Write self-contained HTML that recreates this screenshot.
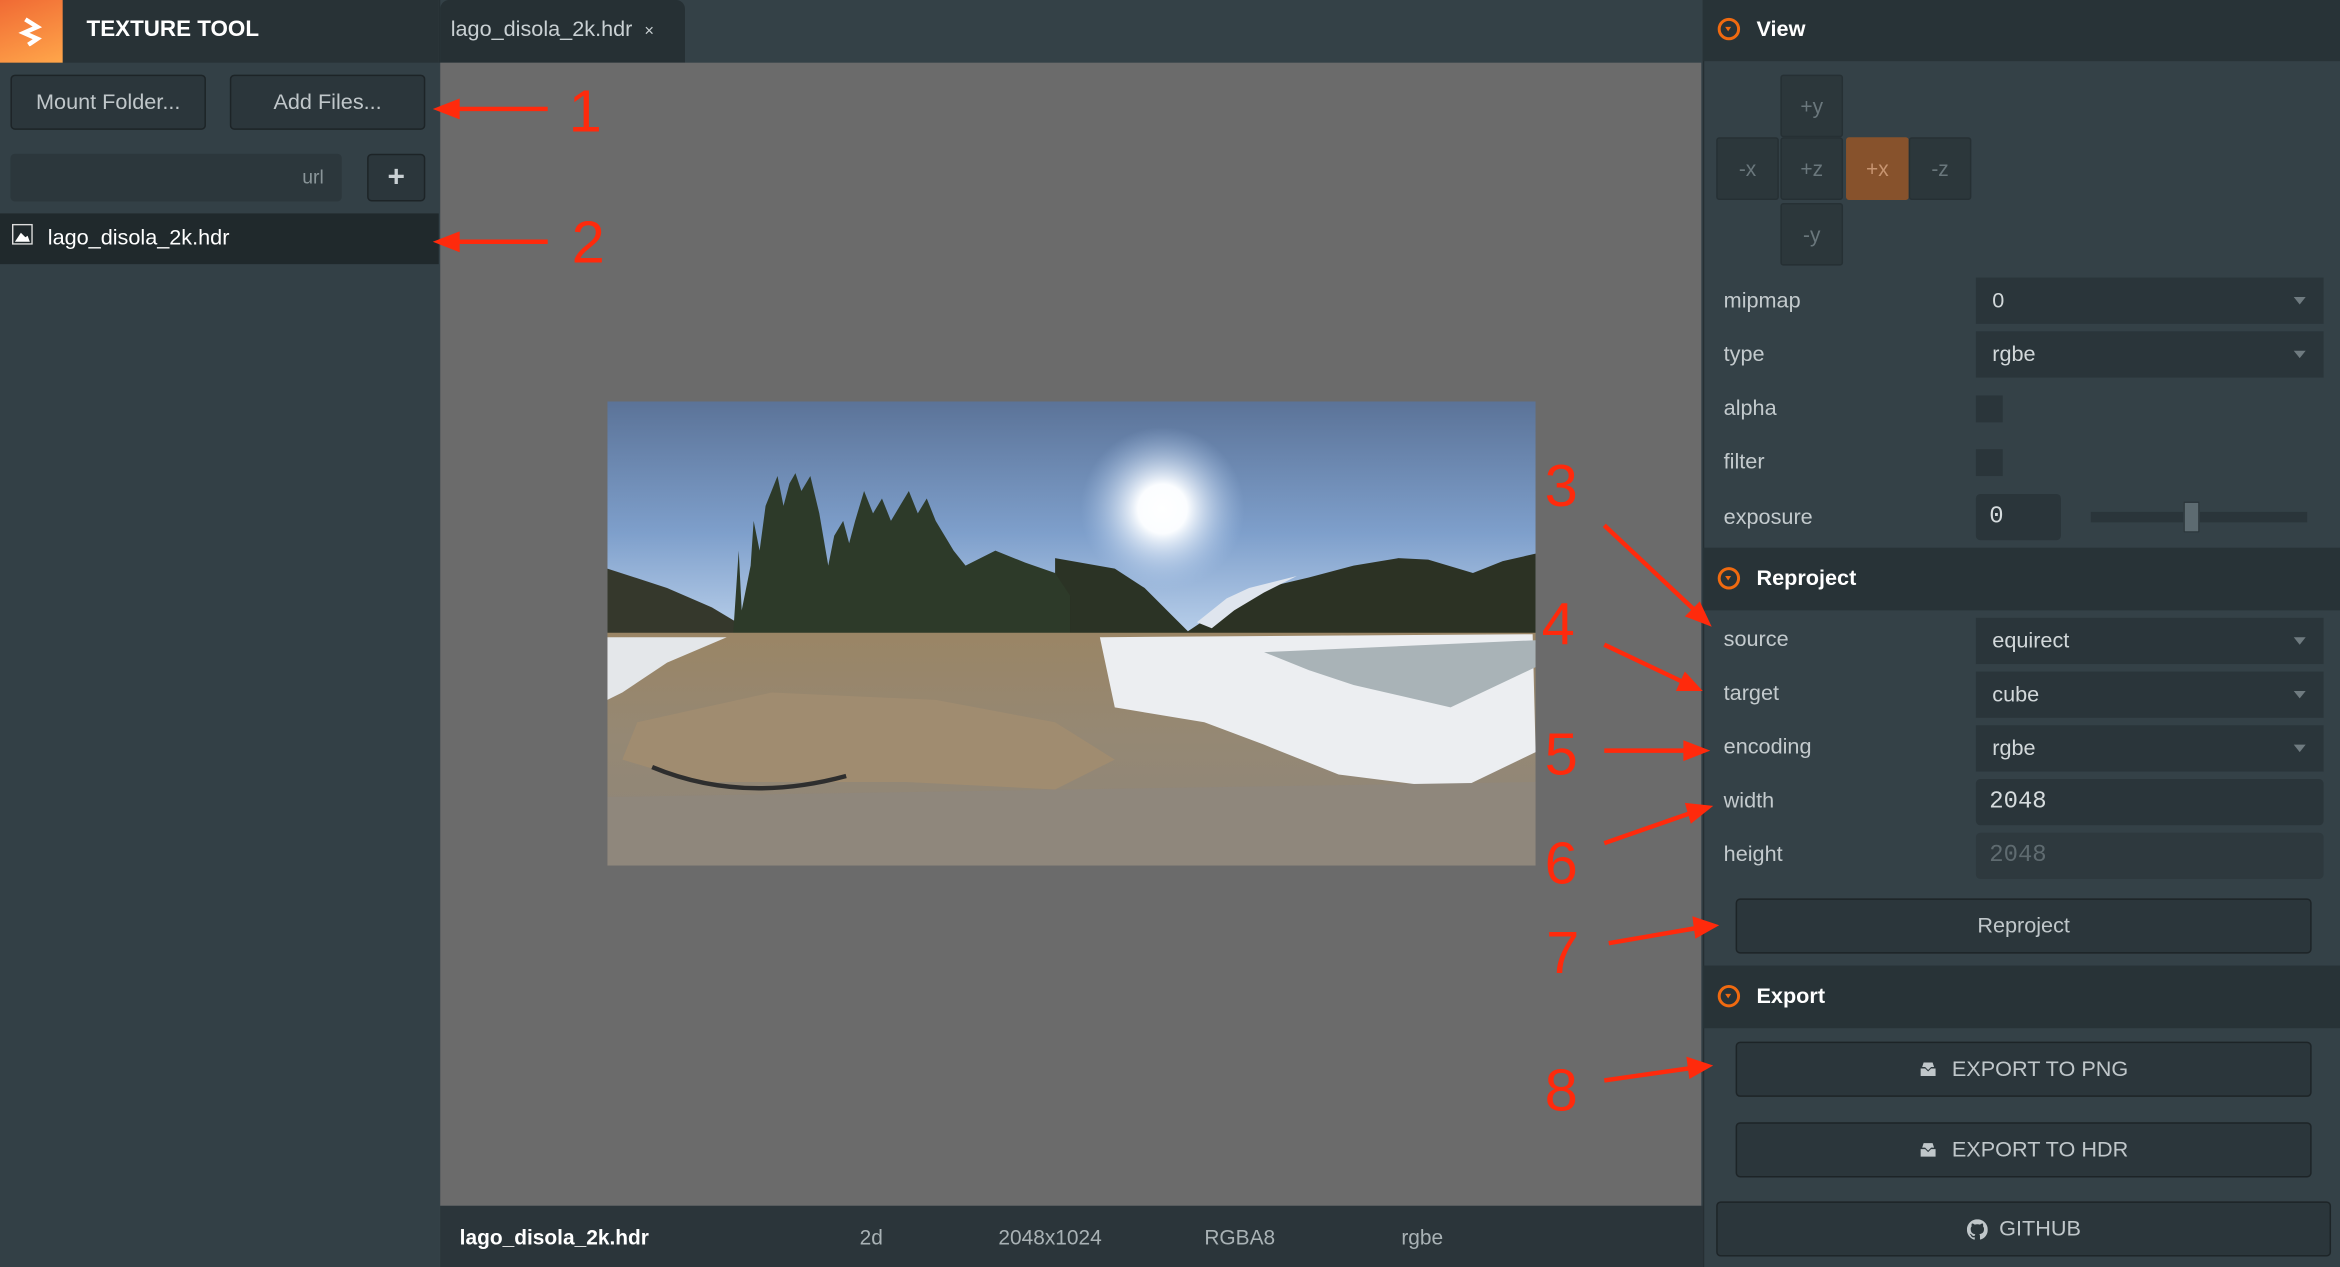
<!DOCTYPE html>
<html><head><meta charset="utf-8"><style>
html,body{margin:0;padding:0;width:2340px;height:1266px;overflow:hidden;background:#344147}
#s{position:absolute;left:0;top:0;width:1568px;height:848.5px;transform:scale(1.49235);transform-origin:0 0;font-family:"Liberation Sans",sans-serif;color:#c9d0d3}
.a{position:absolute;box-sizing:border-box}
.btn{background:#2b363b;border:1px solid #1d2427;border-radius:3px;color:#c0c7ca;font-size:14.5px;display:flex;align-items:center;justify-content:center}
.lbl{position:absolute;left:1155px;font-size:14.5px;color:#c3cacd}
.sel{position:absolute;left:1324px;width:233px;height:31px;background:#2a353a;font-size:14.5px;color:#d2d8da;padding-left:11px;display:flex;align-items:center;box-sizing:border-box}
.sel:after{content:"";position:absolute;right:12px;top:13px;border-left:4.5px solid transparent;border-right:4.5px solid transparent;border-top:5px solid #6f7b80}
.hd{position:absolute;left:1141px;width:427px;background:#283337;font-weight:bold;font-size:14.5px;color:#fff}
.hd i{position:absolute;left:10px;width:15px;height:15px;border:2px solid #f06a10;border-radius:50%;box-sizing:border-box}
.hd i:after{content:"";position:absolute;left:3px;top:4px;border-left:2.5px solid transparent;border-right:2.5px solid transparent;border-top:3.5px solid #f06a10}
.hd span{position:absolute;left:36px}
.cb{position:absolute;width:42px;height:42px;background:#2c373b;border:1px solid #263034;border-radius:2px;color:#6a777c;font-size:14px;display:flex;align-items:center;justify-content:center;box-sizing:border-box}
.num{position:absolute;color:#ff2a0c;font-size:40px;font-family:"Liberation Sans",sans-serif;line-height:1}
</style></head><body><div id="s">
<div class="a" style="left:0;top:0;width:294px;height:848.5px;background:#334046"></div>
<div class="a" style="left:0;top:0;width:294px;height:42px;background:#283236"></div>
<div class="a" style="left:0;top:0;width:42px;height:42px;background:linear-gradient(160deg,#f06a34,#ffa64a)"></div>
<svg class="a" style="left:11px;top:11px" width="20" height="20" viewBox="0 0 20 20"><path d="M6 2 L14 7 L5 11 L14 15 L8 19" fill="none" stroke="#fff" stroke-width="3"/></svg>
<div class="a" style="left:58px;top:11px;font-size:15px;font-weight:bold;color:#fff">TEXTURE TOOL</div>
<div class="a btn" style="left:7px;top:50px;width:131px;height:37px">Mount Folder...</div>
<div class="a btn" style="left:154px;top:50px;width:131px;height:37px">Add Files...</div>
<div class="a" style="left:7px;top:103px;width:222px;height:32px;background:#2c373c;border-radius:3px;font-size:13px;color:#8a9599;text-align:right;padding:8px 12px 0 0">url</div>
<div class="a btn" style="left:246px;top:103px;width:39px;height:32px;font-size:20px;font-weight:bold;color:#c9d0d3">+</div>
<div class="a" style="left:0;top:143px;width:294px;height:34px;background:#20292c"></div>
<svg class="a" style="left:8px;top:150px" width="14" height="14" viewBox="0 0 14 14"><rect x="0.5" y="0.5" width="13" height="13" fill="none" stroke="#ddd"/><path d="M2 12 L6 6 L9 9 L10.5 8 L12 12Z" fill="#fff"/></svg>
<div class="a" style="left:32px;top:152px;font-size:14.5px;color:#fff">lago_disola_2k.hdr</div>
<div class="a" style="left:294px;top:0;width:847px;height:42px;background:#344147;border-left:1px solid #263034"></div>
<div class="a" style="left:295px;top:0;width:164px;height:42px;background:#263034;border-radius:6px 6px 0 0"></div>
<div class="a" style="left:302px;top:12px;font-size:14.5px;color:#c9d0d3">lago_disola_2k.hdr <span style="font-size:11px;margin-left:4px">×</span></div>
<div class="a" style="left:295px;top:42px;width:845px;height:766px;background:#6b6b6b"></div>
<div class="a" style="left:295px;top:808px;width:846px;height:41px;background:#2b353a"></div>
<div class="a" style="left:308px;top:821px;font-size:14px;font-weight:bold;color:#fff">lago_disola_2k.hdr</div>
<div class="a" style="left:576px;top:821px;font-size:14px;color:#a9b2b5">2d</div>
<div class="a" style="left:669px;top:821px;font-size:14px;color:#a9b2b5">2048x1024</div>
<div class="a" style="left:807px;top:821px;font-size:14px;color:#a9b2b5">RGBA8</div>
<div class="a" style="left:939px;top:821px;font-size:14px;color:#a9b2b5">rgbe</div>
<svg class="a" style="left:407px;top:269px" width="622" height="311" viewBox="0 0 622 311">
<defs>
<linearGradient id="sky" x1="0" y1="0" x2="0" y2="1"><stop offset="0" stop-color="#5b7398"/><stop offset="0.55" stop-color="#7e9fcb"/><stop offset="1" stop-color="#bcd2ec"/></linearGradient>
<radialGradient id="sun" cx="0.5" cy="0.5" r="0.5"><stop offset="0" stop-color="#fff"/><stop offset="0.3" stop-color="#fbfdff"/><stop offset="1" stop-color="#a8c4e8" stop-opacity="0"/></radialGradient>
<linearGradient id="gr" x1="0" y1="0" x2="0" y2="1"><stop offset="0" stop-color="#9a8565"/><stop offset="0.45" stop-color="#958874"/><stop offset="1" stop-color="#8d857a"/></linearGradient>
</defs>
<rect width="622" height="160" fill="url(#sky)"/>
<circle cx="372" cy="72" r="55" fill="url(#sun)"/>
<path d="M0 112 L40 125 L70 138 L90 150 L90 160 L0 160Z" fill="#35382c"/>
<path d="M300 105 L340 112 L360 125 L380 145 L395 160 L300 160Z" fill="#2b3325"/>
<path d="M580 115 L600 107 L622 102 L622 160 L380 160 L410 140 L440 125 L470 118 L500 110 L530 105 L550 106Z" fill="#2c3224"/>
<path d="M395 148 L415 132 L430 125 L450 120 L462 117 L440 128 L420 140 L405 152Z" fill="#dfe5ee"/>
<path d="M84 160 L86 130 L88 100 L90 140 L96 110 L98 80 L102 100 L106 70 L110 60 L114 50 L118 70 L122 55 L126 48 L130 60 L136 50 L142 75 L148 110 L152 90 L158 80 L162 95 L166 80 L172 60 L178 75 L184 65 L190 80 L196 70 L202 60 L208 75 L214 65 L220 80 L226 90 L232 100 L240 110 L250 105 L260 100 L280 108 L300 115 L310 130 L310 160Z" fill="#2d3a29"/>
<rect y="155" width="622" height="156" fill="url(#gr)"/>
<path d="M0 158 L80 158 L40 175 L10 195 L0 200Z" fill="#e4e7ea"/>
<path d="M330 158 L620 156 L622 235 L570 260 L490 250 L440 230 L400 215 L340 205Z" fill="#eceef1"/>
<path d="M440 168 L622 160 L622 178 L565 205 L500 190 L470 180Z" fill="#a9b3b7"/>
<path d="M20 215 L110 195 L220 200 L300 215 L340 240 L300 260 L200 255 L60 255 L10 240Z" fill="#a08c70"/>
<path d="M0 265 L622 255 L622 311 L0 311Z" fill="#8f877c"/>
<path d="M30 245 Q90 270 160 251" fill="none" stroke="#2e2e2e" stroke-width="3"/>
</svg>
<div class="a" style="left:1141px;top:0;width:427px;height:848.5px;background:#344147;border-left:1px solid #262f33"></div>
<div class="hd" style="top:0;height:41px"><i style="top:12px"></i><span style="top:12px">View</span></div>
<div class="cb" style="left:1193px;top:50px">+y</div>
<div class="cb" style="left:1150px;top:92px">-x</div>
<div class="cb" style="left:1193px;top:92px">+z</div>
<div class="cb" style="left:1237px;top:92px;background:#87522c;border-color:#87522c;color:#c79470">+x</div>
<div class="cb" style="left:1279px;top:92px">-z</div>
<div class="cb" style="left:1193px;top:136px">-y</div>
<div class="lbl" style="top:194px">mipmap</div><div class="sel" style="top:186px">0</div>
<div class="lbl" style="top:230px">type</div><div class="sel" style="top:222px">rgbe</div>
<div class="lbl" style="top:266px">alpha</div><div class="a" style="left:1324px;top:265px;width:18px;height:18px;background:#2a353a"></div>
<div class="lbl" style="top:302px">filter</div><div class="a" style="left:1324px;top:301px;width:18px;height:18px;background:#2a353a"></div>
<div class="lbl" style="top:339px">exposure</div>
<div class="a" style="left:1324px;top:331px;width:57px;height:31px;background:#2a353a;border-radius:3px;font-family:'Liberation Mono',monospace;font-size:16px;color:#d6dcde;padding:6px 0 0 9px">0</div>
<div class="a" style="left:1401px;top:343px;width:145px;height:7px;background:#2a353a"></div>
<div class="a" style="left:1463px;top:336px;width:11px;height:21px;background:#5d6b71;border:1px solid #2a353a"></div>
<div class="hd" style="top:367px;height:42px"><i style="top:13px"></i><span style="top:13px">Reproject</span></div>
<div class="lbl" style="top:421px">source</div><div class="sel" style="top:414px">equirect</div>
<div class="lbl" style="top:457px">target</div><div class="sel" style="top:450px">cube</div>
<div class="lbl" style="top:493px">encoding</div><div class="sel" style="top:486px">rgbe</div>
<div class="lbl" style="top:529px">width</div>
<div class="a" style="left:1324px;top:522px;width:233px;height:31px;background:#2a353a;border-radius:3px;font-family:'Liberation Mono',monospace;font-size:16px;color:#d6dcde;padding:6px 0 0 9px">2048</div>
<div class="lbl" style="top:565px">height</div>
<div class="a" style="left:1324px;top:558px;width:233px;height:31px;background:#2e393e;border-radius:3px;font-family:'Liberation Mono',monospace;font-size:16px;color:#5f6b70;padding:6px 0 0 9px">2048</div>
<div class="a btn" style="left:1163px;top:602px;width:386px;height:37px">Reproject</div>
<div class="hd" style="top:647px;height:42px"><i style="top:13px"></i><span style="top:13px">Export</span></div>
<div class="a btn" style="left:1163px;top:698px;width:386px;height:37px"><svg width="12" height="11" viewBox="0 0 12 11" style="margin-right:10px"><path d="M1 5 H4 L6 7 L8 5 H11 V10 H1Z M3 1 H9 L10 4 H8 L6 6 L4 4 H2Z" fill="#c0c7ca"/></svg>EXPORT TO PNG</div>
<div class="a btn" style="left:1163px;top:752px;width:386px;height:37px"><svg width="12" height="11" viewBox="0 0 12 11" style="margin-right:10px"><path d="M1 5 H4 L6 7 L8 5 H11 V10 H1Z M3 1 H9 L10 4 H8 L6 6 L4 4 H2Z" fill="#c0c7ca"/></svg>EXPORT TO HDR</div>
<div class="a btn" style="left:1150px;top:805px;width:412px;height:37px"><svg width="14" height="14" viewBox="0 0 16 16" style="margin-right:8px"><path d="M8 0C3.6 0 0 3.6 0 8c0 3.5 2.3 6.5 5.5 7.6.4.1.5-.2.5-.4v-1.4c-2.2.5-2.7-1-2.7-1-.4-.9-.9-1.2-.9-1.2-.7-.5.1-.5.1-.5.8.1 1.2.8 1.2.8.7 1.2 1.9.9 2.300.7.1-.5.3-.9.5-1.1-1.8-.2-3.600-.9-3.600-4 0-.9.3-1.600.8-2.100-.1-.2-.4-1 .1-2.100 0 0 .7-.2 2.200.8.6-.2 1.300-.3 2-.3s1.400.1 2 .3c1.500-1 2.200-.8 2.200-.8.4 1.100.2 1.900.1 2.100.5.6.8 1.300.8 2.100 0 3.100-1.900 3.700-3.600 3.900.3.3.5.8.5 1.500v2.200c0 .2.1.5.6.4C13.7 14.5 16 11.5 16 8c0-4.4-3.6-8-8-8z" fill="#c0c7ca"/></svg>GITHUB</div>
<svg class="a" style="left:0;top:0" width="1568" height="849" viewBox="0 0 1568 849">
<g stroke="#ff2a0c" stroke-width="3" fill="#ff2a0c">
<line x1="367" y1="73" x2="300" y2="73"/><path d="M290 73 L308 66 L308 80Z" stroke="none"/>
<line x1="367" y1="162" x2="300" y2="162"/><path d="M290 162 L308 155 L308 169Z" stroke="none"/>
<line x1="1075" y1="352" x2="1140" y2="413"/><path d="M1147 420 L1129 413 L1139 403Z" stroke="none"/>
<line x1="1075" y1="432" x2="1132" y2="459"/><path d="M1141 463 L1123 463 L1129 450Z" stroke="none"/>
<line x1="1075" y1="503" x2="1135" y2="503"/><path d="M1146 503 L1128 496 L1128 510Z" stroke="none"/>
<line x1="1075" y1="565" x2="1138" y2="543"/><path d="M1148 540 L1133 552 L1129 538Z" stroke="none"/>
<line x1="1078" y1="632" x2="1142" y2="621"/><path d="M1152 620 L1136 629 L1134 614Z" stroke="none"/>
<line x1="1075" y1="724" x2="1138" y2="715"/><path d="M1148 714 L1132 723 L1130 708Z" stroke="none"/>
</g></svg>
<div class="num" style="left:381px;top:55px">1</div>
<div class="num" style="left:383px;top:143px">2</div>
<div class="num" style="left:1035px;top:306px">3</div>
<div class="num" style="left:1033px;top:399px">4</div>
<div class="num" style="left:1035px;top:486px">5</div>
<div class="num" style="left:1035px;top:559px">6</div>
<div class="num" style="left:1036px;top:619px">7</div>
<div class="num" style="left:1035px;top:711px">8</div>
</div></body></html>
